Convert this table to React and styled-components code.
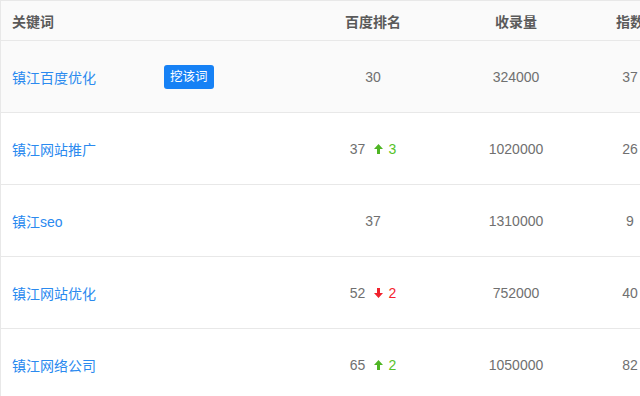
import React from "react";
import styled, { createGlobalStyle } from "styled-components";

const Global = createGlobalStyle`
  html, body { margin: 0; padding: 0; background: #fff; overflow: hidden; }
  body { font-family: "Liberation Sans", "Noto Sans CJK SC", sans-serif; }
`;

const Viewport = styled.div`
  width: 640px;
  height: 396px;
  overflow: hidden;
`;

const Table = styled.div`
  width: 700px;
  border-top: 1px solid #e8e8e8;
  border-left: 1px solid #e8e8e8;
  box-sizing: border-box;
`;

const Row = styled.div`
  display: grid;
  grid-template-columns: 301px 142px 144px 84px 28px;
  align-items: center;
  height: ${(p) => (p.$head ? 39 : 71)}px;
  border-bottom: 1px solid #e8e8e8;
  background: ${(p) => (p.$shade ? "#fafafa" : "#fff")};
`;

const HeadCell = styled.div`
  font-size: 14px;
  font-weight: 700;
  color: #5a5a5a;
  text-align: ${(p) => (p.$left ? "left" : "center")};
  padding-left: ${(p) => (p.$left ? "11px" : "0")};
  white-space: nowrap;
`;

const KeyCell = styled.div`
  display: flex;
  align-items: center;
  padding-left: 11px;
`;

const Keyword = styled.a`
  width: 152px;
  font-size: 14px;
  color: #2b8aef;
  text-decoration: none;
  white-space: nowrap;
`;

const DigButton = styled.button`
  height: 24px;
  padding: 0 6px;
  border: none;
  border-radius: 3px;
  background: #1681f5;
  color: #fff;
  font-family: "Liberation Sans", "Noto Sans CJK SC", sans-serif;
  font-size: 12.5px;
  line-height: 24px;
  cursor: pointer;
`;

const NumCell = styled.div`
  display: flex;
  justify-content: center;
  align-items: center;
  font-size: 14px;
  color: #707070;
  white-space: nowrap;
`;

const Change = styled.span`
  display: inline-flex;
  align-items: center;
  margin-left: 9px;
  color: ${(p) => (p.$up ? "#56c22a" : "#f5222d")};
  font-size: 14px;
  svg { margin-right: 5px; }
`;

const Arrow = ({ up }) => (
  <svg width="9" height="10" viewBox="0 0 9 10">
    {up ? (
      <path d="M4.5 0 L9 5 H6 V10 H3 V5 H0 Z" fill="#4fb524" />
    ) : (
      <path d="M4.5 10 L9 5 H6 V0 H3 V5 H0 Z" fill="#f0222d" />
    )}
  </svg>
);

const data = [
  { kw: "镇江百度优化", rank: 30, ch: null, count: 324000, idx: 37, btn: true, shade: true },
  { kw: "镇江网站推广", rank: 37, ch: 3, count: 1020000, idx: 26 },
  { kw: "镇江seo", rank: 37, ch: null, count: 1310000, idx: 9 },
  { kw: "镇江网站优化", rank: 52, ch: -2, count: 752000, idx: 40 },
  { kw: "镇江网络公司", rank: 65, ch: 2, count: 1050000, idx: 82 },
];

export default function App() {
  return (
    <Viewport>
      <Global />
      <Table>
        <Row $head $shade>
          <HeadCell $left>关键词</HeadCell>
          <HeadCell>百度排名</HeadCell>
          <HeadCell>收录量</HeadCell>
          <HeadCell>指数</HeadCell>
          <div />
        </Row>
        {data.map((d) => (
          <Row key={d.kw} $shade={d.shade}>
            <KeyCell>
              <Keyword href="#">{d.kw}</Keyword>
              {d.btn && <DigButton>挖该词</DigButton>}
            </KeyCell>
            <NumCell>
              {d.rank}
              {d.ch !== null && (
                <Change $up={d.ch > 0}>
                  <Arrow up={d.ch > 0} />
                  {Math.abs(d.ch)}
                </Change>
              )}
            </NumCell>
            <NumCell>{d.count}</NumCell>
            <NumCell>{d.idx}</NumCell>
            <div />
          </Row>
        ))}
      </Table>
    </Viewport>
  );
}
